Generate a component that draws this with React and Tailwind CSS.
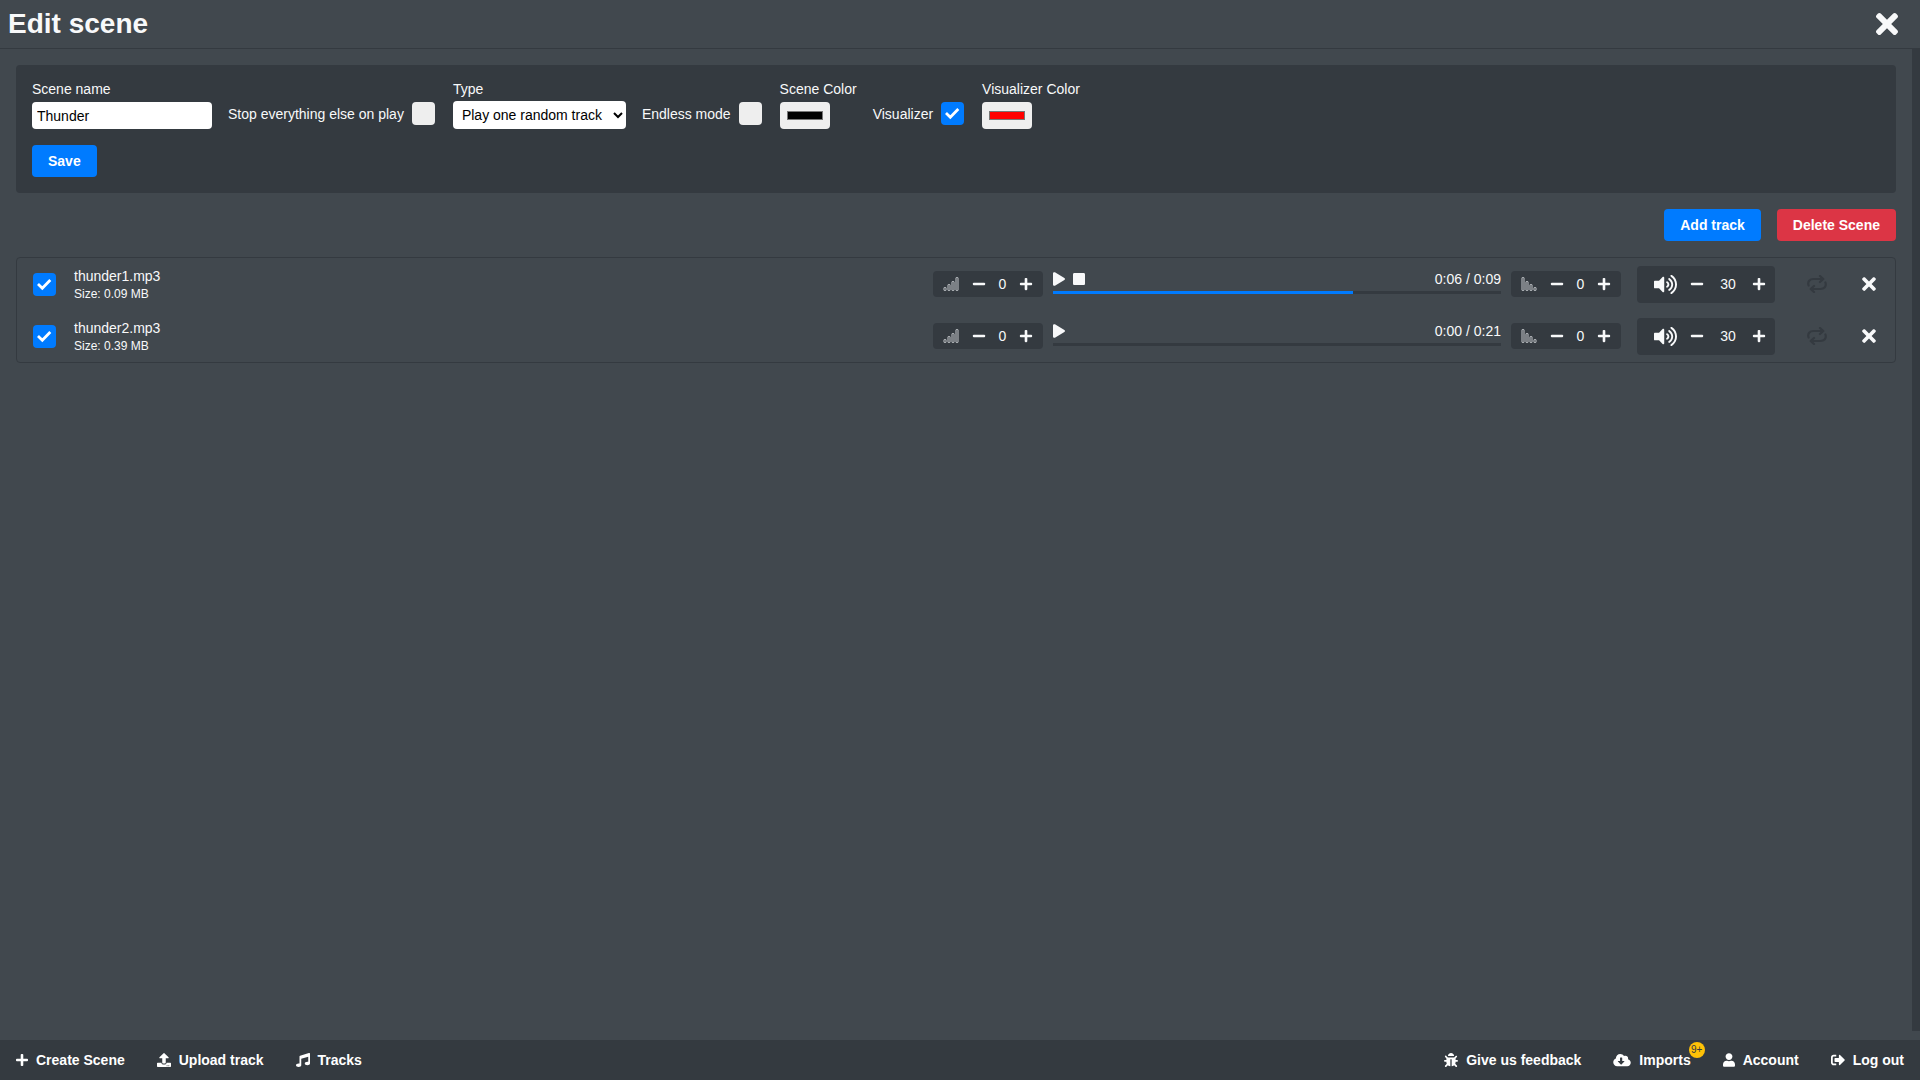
import React from 'react'
import {
  FaBug,
  FaCloudDownloadAlt,
  FaMinus,
  FaMusic,
  FaPlay,
  FaPlus,
  FaSignOutAlt,
  FaStop,
  FaTimes,
  FaUpload,
  FaUser,
  FaVolumeUp,
} from 'react-icons/fa'

const tracks = [
  { id: 1, name: 'thunder1.mp3', size: '0.09 MB', position: '0:06', duration: '0:09', progress: 67, playing: true },
  { id: 2, name: 'thunder2.mp3', size: '0.39 MB', position: '0:00', duration: '0:21', progress: 0, playing: false },
]

const bars = [
  { x: 0, height: 4 },
  { x: 4, height: 7 },
  { x: 8, height: 10 },
  { x: 12, height: 14 },
]

function FadeIcon({ out }) {
  return (
    <svg className={out ? 'h-[14px] w-4 -scale-x-100' : 'h-[14px] w-4'} viewBox="0 0 16 14" aria-hidden="true">
      {bars.map((bar) => (
        <rect
          key={bar.x}
          x={bar.x + 1}
          y={14.5 - bar.height}
          width="2"
          height={bar.height - 1}
          rx="0.5"
          fill="none"
          stroke="#d5d7da"
          strokeWidth="0.9"
        />
      ))}
    </svg>
  )
}

function LoopIcon() {
  return (
    <svg
      className="h-[18px] w-5"
      viewBox="0 0 20 18"
      fill="none"
      stroke="currentColor"
      strokeWidth="2.2"
      strokeLinecap="round"
      strokeLinejoin="round"
      aria-hidden="true"
    >
      <path d="M1.6 10.5C.2 6.5 3 4 6.5 4H16M13 1l3.300 3L13 7" />
      <path d="M18.400 7.500C19.800 11.500 17 14 13.500 14H4M7 11l-3.300 3L7 17" />
    </svg>
  )
}

function Checkbox({ id, checked = false, label }) {
  return (
    <span className="relative inline-flex size-[23px] shrink-0">
      <input
        id={id}
        type="checkbox"
        defaultChecked={checked}
        aria-label={label}
        className="peer size-[23px] appearance-none rounded bg-[#eee] checked:bg-[#007bff]"
      />
      <svg
        className="pointer-events-none absolute inset-0 hidden peer-checked:block"
        viewBox="0 0 23 23"
        aria-hidden="true"
      >
        <path d="M5 11 9.300 15.200 17.300 7" fill="none" stroke="#fff" strokeWidth="2.8" />
      </svg>
    </span>
  )
}

function CheckField({ id, label, checked }) {
  return (
    <div className="mt-[21px] mr-0.5 flex items-center gap-2">
      <label htmlFor={id}>{label}</label>
      <Checkbox id={id} checked={checked} />
    </div>
  )
}

function ColorField({ id, label, value }) {
  return (
    <div className="flex flex-col items-start gap-[5px]">
      <label htmlFor={id} className="leading-4">
        {label}
      </label>
      <input id={id} type="color" defaultValue={value} className="h-[27px] w-[50px] rounded bg-[#efefef] p-[5px]" />
    </div>
  )
}

function Button({ danger, ...props }) {
  return (
    <button
      type="button"
      className={
        danger
          ? 'h-8 rounded bg-[#dc3545] px-4 font-bold text-white'
          : 'h-8 rounded bg-[#007bff] px-4 font-bold text-white'
      }
      {...props}
    />
  )
}

function Fade({ out }) {
  return (
    <div className="flex h-[26px] w-[110px] shrink-0 items-center justify-between rounded bg-[#343a40] px-[10px]">
      <FadeIcon out={out} />
      <button aria-label={out ? 'Shorter fade out' : 'Shorter fade in'}>
        <FaMinus className="size-[14px]" />
      </button>
      <span>0</span>
      <button aria-label={out ? 'Longer fade out' : 'Longer fade in'}>
        <FaPlus className="size-[14px]" />
      </button>
    </div>
  )
}

function Volume() {
  return (
    <div className="ml-4 flex h-[37px] w-[138px] shrink-0 items-center rounded bg-[#343a40] pr-[9px] pl-[17px]">
      <FaVolumeUp className="mr-[13px] size-[23px]" />
      <button aria-label="Volume down">
        <FaMinus className="size-[14px]" />
      </button>
      <span className="flex-1 text-center">30</span>
      <button aria-label="Volume up">
        <FaPlus className="size-[14px]" />
      </button>
    </div>
  )
}

function Player({ track }) {
  return (
    <div className="mx-[10px] w-[448px] shrink-0 pb-[5px]">
      <div className="flex h-5 items-center gap-2">
        <button aria-label="Play">
          <FaPlay className="h-[14px] w-3" />
        </button>
        {track.playing && (
          <button aria-label="Stop">
            <FaStop className="h-[14px] w-3" />
          </button>
        )}
        <span className="ml-auto">
          {track.position} / {track.duration}
        </span>
      </div>
      <div className="mt-0.5 h-[3px] bg-[#343a40]">
        <div className="h-full bg-[#007bff]" style={{ width: `${track.progress}%` }} />
      </div>
    </div>
  )
}

function TrackRow({ track }) {
  return (
    <li className="flex h-[52px] items-center px-4">
      <Checkbox checked label={`Enable ${track.name}`} />
      <div className="ml-[18px] flex-1">
        <p className="leading-5">{track.name}</p>
        <p className="text-xs leading-4">Size: {track.size}</p>
      </div>
      <Fade />
      <Player track={track} />
      <Fade out />
      <Volume />
      <button className="ml-8 text-[#343a40]" aria-label="Loop">
        <LoopIcon />
      </button>
      <button className="ml-8" aria-label="Remove track">
        <FaTimes className="size-5" />
      </button>
    </li>
  )
}

function NavItem({ icon, children, badge }) {
  return (
    <a href="#" className="relative flex items-center gap-2">
      {icon}
      {children}
      {badge && (
        <span className="absolute -top-2 -right-[14px] flex size-4 items-center justify-center rounded-full bg-[#ffc107] text-[10px] font-normal text-[#343a40]">
          {badge}
        </span>
      )}
    </a>
  )
}

export default function App() {
  return (
    <div className="flex h-screen flex-col bg-[#41484e] font-['Liberation_Sans',Arial,sans-serif] text-sm text-[#f8f9fa]">
      <header className="flex h-[49px] shrink-0 items-center justify-between border-b border-[#343a40] pr-[17px] pl-2">
        <h1 className="text-[28px] leading-8 font-bold">Edit scene</h1>
        <button aria-label="Close">
          <FaTimes className="size-8" />
        </button>
      </header>

      <div className="flex min-h-0 flex-1">
        <main className="flex flex-1 flex-col gap-4 p-4">
          <form className="rounded bg-[#343a40] p-4">
            <div className="flex flex-wrap items-start gap-4">
              <div className="flex flex-col gap-[5px]">
                <label htmlFor="name" className="leading-4">
                  Scene name
                </label>
                <input
                  id="name"
                  type="text"
                  defaultValue="Thunder"
                  className="h-[27px] w-[180px] rounded bg-white px-[5px] text-black"
                />
              </div>
              <CheckField id="stop" label="Stop everything else on play" />
              <div className="flex flex-col gap-1">
                <label htmlFor="type" className="leading-4">
                  Type
                </label>
                <select id="type" className="h-7 w-[173px] rounded bg-white px-[5px] text-black">
                  <option>Play one random track</option>
                </select>
              </div>
              <CheckField id="endless" label="Endless mode" />
              <ColorField id="scene-color" label="Scene Color" value="#000000" />
              <CheckField id="visualizer" label="Visualizer" checked />
              <ColorField id="visualizer-color" label="Visualizer Color" value="#ff0000" />
            </div>
            <div className="mt-4 flex">
              <Button>Save</Button>
            </div>
          </form>

          <div className="flex justify-end gap-4">
            <Button>Add track</Button>
            <Button danger>Delete Scene</Button>
          </div>

          <ul className="rounded border border-[#343a40]">
            {tracks.map((track) => (
              <TrackRow key={track.id} track={track} />
            ))}
          </ul>
        </main>
        <div className="mb-[9px] w-2 bg-[#343a40]" aria-hidden="true" />
      </div>

      <footer className="flex h-10 shrink-0 items-center justify-between bg-[#343a40] px-4 font-bold text-white">
        <nav className="flex gap-8">
          <NavItem icon={<FaPlus className="h-[14px] w-3" />}>Create Scene</NavItem>
          <NavItem icon={<FaUpload className="size-[14px]" />}>Upload track</NavItem>
          <NavItem icon={<FaMusic className="size-[14px]" />}>Tracks</NavItem>
        </nav>
        <nav className="flex gap-8">
          <NavItem icon={<FaBug className="size-[14px]" />}>Give us feedback</NavItem>
          <NavItem icon={<FaCloudDownloadAlt className="h-[14px] w-[18px]" />} badge="9+">
            Imports
          </NavItem>
          <NavItem icon={<FaUser className="h-[14px] w-3" />}>Account</NavItem>
          <NavItem icon={<FaSignOutAlt className="size-[14px]" />}>Log out</NavItem>
        </nav>
      </footer>
    </div>
  )
}
